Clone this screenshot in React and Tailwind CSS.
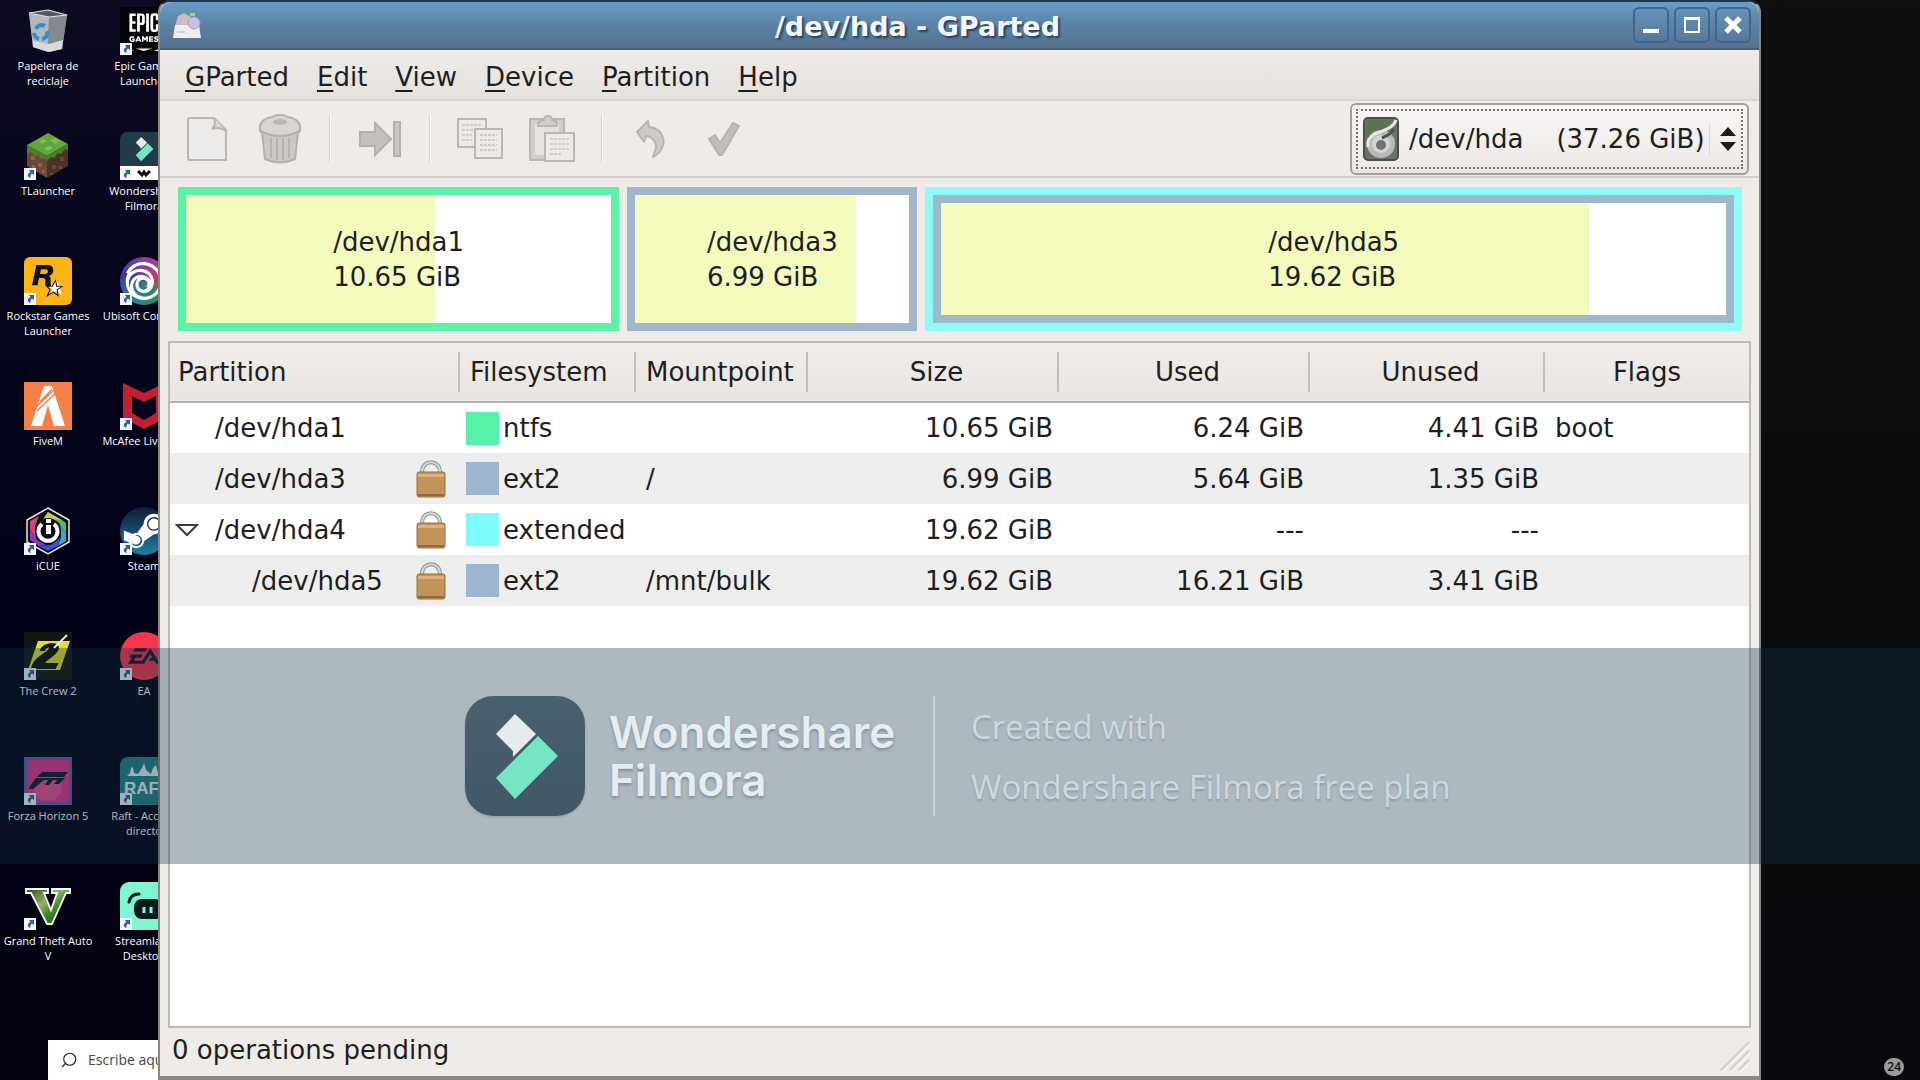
import React from 'react';
import { SiEpicgames, SiUbisoft, SiRockstargames, SiEa } from 'react-icons/si';
import { FaSteamSymbol } from 'react-icons/fa';
import { Search } from 'lucide-react';

/* ---------- Desktop icons ---------- */

function RecycleBin() {
  return (
    <svg viewBox="0 0 48 48" className="size-12">
      <path d="M5 6 24 3l19 5-5 34-13 3-16-5z" fill="#8d9095" />
      <path d="M5 6l20 4-1 35-15-5z" fill="#b4b7bb" />
      <path d="M25 10l18-2-5 34-14 3z" fill="#85888d" />
      <path d="M9 34l16 3 14-4-1 9-13 3-16-5z" fill="#d9dadb" />
      <path d="M5 6l19-3 19 5-18 2z" fill="#55585e" stroke="#e3e4e6" strokeWidth="1.2" />
      <path d="M12 22a6 6 0 0 1 9-3M10 26a7 7 0 0 0 5 6M18 32a6 6 0 0 0 5-8" fill="none" stroke="#2f8fd3" strokeWidth="4" />
    </svg>
  );
}

function GrassBlock() {
  return (
    <svg viewBox="0 0 48 48" className="size-12">
      <path d="M3 13v21l20 12V24z" fill="#6b4a35" />
      <path d="M44 13v21L23 46V24z" fill="#4a3326" />
      <path d="M24 1 44 12 23 24 3 13z" fill="#62a63c" />
      <path d="M3 13l20 11v5l-3-3-3 1-3-4-3 1-4-4-4 1zM44 12 23 24v5l4-4 3 1 4-5 3 1 4-5 3 1z" fill="#487f2c" />
      <path d="M14 9l5-2 4 2-5 3zM26 8l5-2 5 3-5 3zM20 16l5-2 4 2-5 3z" fill="#7dc152" />
      <path d="M7 24h4v4H7zM14 31h4v4h-4zM8 33h3v3H8zM18 38h3v3h-3z" fill="#8c6347" />
      <path d="M28 33h4v4h-4zM36 25h4v4h-4zM35 34h3v3h-3zM26 41h3v2h-3z" fill="#6a4a37" />
    </svg>
  );
}

function Rockstar() {
  return (
    <div className="relative grid size-12 place-items-center rounded-md bg-[#fbb316]">
      <svg viewBox="0 0 48 48" className="absolute inset-0 size-12">
        <path d="M32 22l3 6h6l-5 4 2 6-6-4-6 4 2-6-5-4h6z" fill="#fff" />
      </svg>
      <SiRockstargames size={32} color="#111" className="relative" />
    </div>
  );
}

function FiveM() {
  return (
    <svg viewBox="0 0 48 48" className="size-12">
      <rect width="48" height="48" fill="#f58149" />
      <path d="M20 4h8l13 40H30L24 23l-6 21H7z" fill="#fff" />
      <path d="M12 25 30 8M13 29 31 12M16 20 28 7" stroke="#f58149" strokeWidth="1.5" />
    </svg>
  );
}

function ICue() {
  return (
    <svg viewBox="0 0 48 48" className="size-12">
      <path d="M24 1 45 13v22L24 47 3 35V13z" fill="#0c0c14" stroke="#e8e8ee" strokeWidth="1.5" />
      <path d="M24 5l14 8-9 1-12 1z" fill="#c7d243" />
      <path d="M38 13l4 3v11l-7-11-7-4z" fill="#53b66a" />
      <path d="M42 27v7l-8 5 3-9-1-13z" fill="#36a9c9" />
      <path d="M34 39l-10 5-9-5 12-1 9-8z" fill="#3557d6" />
      <path d="M15 39l-9-6V22l6 10 10 6z" fill="#8d35c9" />
      <path d="M6 22v-8l9-5-4 10 1 13z" fill="#d4447a" />
      <circle cx="24" cy="24" r="13" fill="#0c0c14" />
      <path d="M18 17a9.500 9.500 0 1 0 12 0" fill="none" stroke="#fff" strokeWidth="4" />
      <path d="M22 12h5v4h-5zM22 18h5v9h-5z" fill="#fff" />
    </svg>
  );
}

function Crew() {
  return (
    <svg viewBox="0 0 48 48" className="size-12">
      <rect width="48" height="48" fill="#14170f" />
      <path d="M14 9h32L36 38H4z" fill="#e4e02c" />
      <path d="M17 18c2-6 16-9 17-2 0 6-12 10-15 16h14l-2 4H8c2-11 17-14 18-20 0-3-5-1-6 2z" fill="#11120d" stroke="#11120d" strokeWidth="2" />
      <path d="M43 3 30 16" stroke="#e9e9dd" strokeWidth="2" />
    </svg>
  );
}

function Forza() {
  return (
    <svg viewBox="0 0 48 48" className="size-12">
      <rect width="48" height="48" fill="#5a5fae" />
      <rect x="3" y="3" width="42" height="42" fill="#e0358c" />
      <circle cx="24" cy="30" r="14" fill="#f25c8c" opacity=".6" />
      <path d="M18 15h26l-4 5H13zM12 21h29l-6 6h-5l3-4h-4l-4 5h-4l3-5h-4L9 32H4z" fill="#131a2b" />
    </svg>
  );
}

function Gta() {
  return (
    <svg viewBox="0 0 48 48" className="size-12">
      <defs>
        <linearGradient id="gta" x1="0" y1="0" x2="1" y2="1">
          <stop offset="0" stopColor="#1f4a1c" />
          <stop offset=".4" stopColor="#8fb566" />
          <stop offset=".6" stopColor="#3f8a2a" />
          <stop offset="1" stopColor="#17400f" />
        </linearGradient>
      </defs>
      <path d="M2 7h22v4h-4l7 17 6-17h-5V7h18v4h-4L28 42h-5L7 11H2z" fill="url(#gta)" stroke="#fff" strokeWidth="1.800" />
    </svg>
  );
}

function Epic() {
  return (
    <div className="relative grid size-12 place-items-center bg-[#050507]">
      <div className="absolute inset-x-2 top-1 bottom-1 bg-white" />
      <SiEpicgames size={48} color="#050507" className="relative" />
    </div>
  );
}

function FilmoraMark({ className }) {
  return (
    <svg viewBox="0 0 120 120" className={className}>
      <path d="M50 18 31 38l17 17v6l23-23z" fill="#e6ebee" />
      <path d="M73 40 93 60 50 103 31 82z" fill="#75e5c4" />
    </svg>
  );
}

function FilmoraShortcut() {
  return (
    <div className="flex size-12 flex-col overflow-hidden rounded-t-lg bg-[#213c49]">
      <FilmoraMark className="h-[34px] w-12" />
      <div className="flex flex-1 justify-center bg-white">
        <svg viewBox="0 0 16 14" className="w-4">
          <path d="M2 5l4 4 2-3 2 3 4-4" fill="none" stroke="#111" strokeWidth="3" />
        </svg>
      </div>
    </div>
  );
}

function Ubisoft() {
  return (
    <div className="grid size-12 place-items-center rounded-full bg-[conic-gradient(#8b3fa8,#c43a6b,#2a8c5c,#2c7c9c,#3a3a9c,#8b3fa8)]">
      <SiUbisoft size={38} color="#fff" />
    </div>
  );
}

function McAfee() {
  return (
    <svg viewBox="0 0 48 48" className="size-12">
      <path d="M3 1l21 10L45 1v35L24 47 3 36zM12 14v17l12 7 12-7V14l-12 6z" fill="#c5202f" fillRule="evenodd" />
    </svg>
  );
}

function Steam() {
  return (
    <div className="grid size-12 place-items-center rounded-full bg-linear-to-b from-[#0d1b38] to-[#1d7fa8]">
      <FaSteamSymbol size={46} color="#fff" />
    </div>
  );
}

function Ea() {
  return (
    <div className="grid size-12 place-items-center rounded-full bg-[#f5364c]">
      <SiEa size={32} color="#1b1730" />
    </div>
  );
}

function Raft() {
  return (
    <svg viewBox="0 0 48 48" className="size-12">
      <rect width="48" height="48" rx="8" fill="#257f86" />
      <path d="M7 19l3-3 1-5 2-1 1 6 4 1 4-6 2-5 2 7 5 4 2-6 3-3 2 8 4 3z" fill="#e7f0f2" />
      <text x="4" y="37" fill="#e7f0f2" fontFamily="Liberation Sans Narrow, Liberation Sans" fontWeight="700" fontSize="17">RAFT</text>
    </svg>
  );
}

function Streamlabs() {
  return (
    <svg viewBox="0 0 48 48" className="size-12">
      <rect width="48" height="48" rx="9" fill="#80f5d2" />
      <rect x="14" y="17" width="29" height="20" rx="8" fill="#0b1a20" />
      <path d="M9 20c1-5 4-8 10-8" fill="none" stroke="#0b1a20" strokeWidth="3" strokeLinecap="round" />
      <path d="M24 25v6M31 25v6" stroke="#80f5d2" strokeWidth="3" />
    </svg>
  );
}

const shortcuts = [
  { label: 'Papelera de\nreciclaje', Icon: RecycleBin, plain: true },
  { label: 'Epic Games\nLauncher', Icon: Epic },
  { label: 'TLauncher', Icon: GrassBlock },
  { label: 'Wondershare\nFilmora', Icon: FilmoraShortcut },
  { label: 'Rockstar Games\nLauncher', Icon: Rockstar },
  { label: 'Ubisoft Connect', Icon: Ubisoft },
  { label: 'FiveM', Icon: FiveM, plain: true },
  { label: 'McAfee LiveSafe', Icon: McAfee },
  { label: 'iCUE', Icon: ICue },
  { label: 'Steam', Icon: Steam },
  { label: 'The Crew 2', Icon: Crew },
  { label: 'EA', Icon: Ea },
  { label: 'Forza Horizon 5', Icon: Forza },
  { label: 'Raft - Acceso\ndirecto', Icon: Raft },
  { label: 'Grand Theft Auto\nV', Icon: Gta },
  { label: 'Streamlabs\nDesktop', Icon: Streamlabs },
];

function Shortcut({ label, Icon, plain }) {
  return (
    <button className="flex h-[125px] flex-col items-center">
      <span className="relative block">
        <Icon />
        {!plain && (
          <svg viewBox="0 0 12 12" className="absolute bottom-0 left-0 size-3">
            <rect width="12" height="12" fill="#f1f4f8" />
            <path d="M5 2h5v5L8 5.500C6.500 6.500 6 8 6.500 10 3 9 3 5.500 6.500 4z" fill="#2b5c9c" />
          </svg>
        )}
      </span>
      <span className="mt-[3px] text-center text-[11px] leading-[15px] whitespace-pre text-white">{label}</span>
    </button>
  );
}

function DesktopSide() {
  return (
    <div className="flex w-[158px] shrink-0 flex-col overflow-hidden bg-linear-to-b from-[#0d0b20] via-[#03031a] via-40% to-[#02010e] pt-[7px]">
      <div className="grid w-48 grid-cols-2">
        {shortcuts.map(item => <Shortcut key={item.label} {...item} />)}
      </div>
      <label className="mt-auto ml-12 flex h-10 w-[340px] items-center gap-2.5 bg-white px-3 text-[#222]">
        <Search size={18} strokeWidth={1.5} className="shrink-0 -scale-x-100" />
        <input
          aria-label="Buscar"
          placeholder="Escribe aquí para buscar"
          className="w-full text-sm outline-none placeholder:text-[#444]"
        />
      </label>
    </div>
  );
}

/* ---------- Toolbar icons ---------- */

function NewIcon() {
  return (
    <svg viewBox="0 0 42 46" className="h-[46px] w-[42px]">
      <path d="M3 2h24l12 12v30H3q-2 0-2-2V4q0-2 2-2z" fill="#edebe9" stroke="#b9b6b3" strokeWidth="2" />
      <path d="M27 2c2 5 0 9-2 11 5-2 10-1 14 2" fill="#dad7d4" stroke="#b9b6b3" strokeWidth="2" />
    </svg>
  );
}

function TrashIcon() {
  return (
    <svg viewBox="0 0 44 50" className="h-[50px] w-11">
      <path d="M4 18h36l-3 27q-15 7-30 0z" fill="#cbc8c5" stroke="#b3b0ad" strokeWidth="2" />
      <path d="M13 24v20M19 24v22M25 24v22M31 24v20" stroke="#b6b3b0" strokeWidth="2" />
      <path d="M2 12q2-8 13-9 1-2 7-2t7 2q11 1 13 9v5q-20 10-40 0z" fill="#d9d6d3" stroke="#b3b0ad" strokeWidth="2" />
      <ellipse cx="22" cy="8" rx="7" ry="3" fill="#b9b6b3" />
    </svg>
  );
}

function ResizeIcon() {
  return (
    <svg viewBox="0 0 44 38" className="h-[38px] w-11">
      <path d="M2 12h15V3l16 16-16 16v-9H2z" fill="#c2bfbc" stroke="#b3b0ad" strokeWidth="2" />
      <rect x="36" y="2" width="6" height="34" fill="#c9c6c3" stroke="#b3b0ad" strokeWidth="2" />
    </svg>
  );
}

function CopyIcon() {
  return (
    <svg viewBox="0 0 48 44" className="h-11 w-12" fill="#edebe9" stroke="#b9b6b3" strokeWidth="2">
      <path d="M2 2h28v28H2z" />
      <path d="M6 8h20M6 13h20M6 18h10M6 23h10" strokeDasharray="3 1" stroke="#cfccc9" />
      <path d="M19 12h27v29H19z" />
      <path d="M24 18h17M24 23h17M24 28h17M24 33h17" strokeDasharray="3 1" stroke="#cfccc9" />
    </svg>
  );
}

function PasteIcon() {
  return (
    <svg viewBox="0 0 48 48" className="size-12" fill="#d0cdca" stroke="#b9b6b3" strokeWidth="2">
      <path d="M2 4h34v41H2z" />
      <path d="M7 9h24v31H7z" fill="#e5e2df" stroke="none" />
      <path d="M10 11q0-6 6-6 0-4 4-4t4 4q5 0 5 6z" />
      <path d="M17 18h29v28H17z" fill="#edebe9" />
      <path d="M22 24h19M22 29h19M22 34h19M22 39h12" strokeDasharray="3 1" stroke="#cfccc9" />
    </svg>
  );
}

function UndoIcon() {
  return (
    <svg viewBox="0 0 32 40" className="h-10 w-8">
      <path d="M12 2 1 13l7 10 2-6c8 1 10 6 10 12l-3 9c8-4 12-12 10-19C25 12 19 8 13 8z" fill="#cdcac7" stroke="#b6b3b0" strokeWidth="2" strokeLinejoin="round" />
    </svg>
  );
}

function ApplyIcon() {
  return (
    <svg viewBox="0 0 34 38" className="h-[38px] w-[34px]">
      <path d="M2 19l6-4 5 8L26 3l6 3-17 29h-3z" fill="#bfbcb9" stroke="#b6b3b0" strokeWidth="2" strokeLinejoin="round" />
    </svg>
  );
}

function ToolButton({ label, children }) {
  return (
    <button aria-label={label} disabled className="grid h-14 w-[72px] place-items-center">
      {children}
    </button>
  );
}

function ToolSeparator() {
  return <span className="mx-[13px] h-12 w-0.5 border-l border-[#d6d2cf] bg-white" />;
}

function DiskIcon() {
  return (
    <svg viewBox="0 0 36 44" className="h-11 w-9 shrink-0">
      <rect x="1" y="1" width="34" height="42" rx="4" fill="#6e716e" stroke="#4b4e4b" strokeWidth="2" />
      <path d="M3 3h28L17 15 3 18z" fill="#5d7352" />
      <circle cx="18" cy="27" r="14" fill="#b7bab7" />
      <path d="M33 3C30 12 20 13 12 17c-6 3-8 8-7 13" fill="none" stroke="#e6e8e6" strokeWidth="3" />
      <circle cx="18" cy="27" r="9" fill="#d3d5d3" />
      <circle cx="18" cy="28" r="5" fill="#70736f" />
      <path d="M31 12c-3 5-7 7-12 9" fill="none" stroke="#50534f" strokeWidth="3" />
    </svg>
  );
}

function LockIcon() {
  return (
    <svg viewBox="0 0 30 38" className="h-[38px] w-[30px]">
      <path d="M6 18v-6C6 -1 24 -1 24 12v6" fill="none" stroke="#8f9194" strokeWidth="4" />
      <path d="M6 18v-6C6 -1 24 -1 24 12v6" fill="none" stroke="#d5d7d9" strokeWidth="2" />
      <rect x="1" y="12" width="28" height="25" rx="2" fill="#c2935a" stroke="#97703f" strokeWidth="1" />
      <path d="M2 14h26v3H2z" fill="#dbb37b" />
      <path d="M2 34h26v2H2z" fill="#8b6a44" />
    </svg>
  );
}

function AppIcon() {
  return (
    <svg viewBox="0 0 30 28" className="h-7 w-[30px]">
      <path d="M3 15 6 5l6-3 7 4 3 9z" fill="#cdb9c7" />
      <path d="M3 14h24l2 13H1z" fill="#f1eef2" />
      <circle cx="22" cy="12" r="6" fill="#c5c3e0" stroke="#a5a2ba" />
      <path d="M18 2h5v3h-5z" fill="#b8d06a" />
      <path d="M5 21h8" stroke="#d5ced8" strokeWidth="2" />
    </svg>
  );
}

/* ---------- GParted window ---------- */

const menus = ['GParted', 'Edit', 'View', 'Device', 'Partition', 'Help'];

const partitions = [
  { name: '/dev/hda1', fs: 'ntfs', mount: '', size: '10.65 GiB', used: '6.24 GiB', unused: '4.41 GiB', flags: 'boot' },
  { name: '/dev/hda3', locked: true, fs: 'ext2', mount: '/', size: '6.99 GiB', used: '5.64 GiB', unused: '1.35 GiB', flags: '' },
  { name: '/dev/hda4', locked: true, open: true, fs: 'extended', mount: '', size: '19.62 GiB', used: '---', unused: '---', flags: '' },
  { name: '/dev/hda5', locked: true, child: true, fs: 'ext2', mount: '/mnt/bulk', size: '19.62 GiB', used: '16.21 GiB', unused: '3.41 GiB', flags: '' },
];

const fsColors = {
  ntfs: 'bg-[#54f3a9]',
  ext2: 'bg-[#9db5cf]',
  extended: 'bg-[#7dfcfe]',
};

const columns = [
  { title: 'Partition', className: 'w-[290px] pl-2 text-left' },
  { title: 'Filesystem', className: 'w-[176px] pl-2.5 text-left' },
  { title: 'Mountpoint', className: 'w-[172px] pl-2.5 text-left' },
  { title: 'Size', className: 'w-[251px] pr-0 pl-1.5 text-center' },
  { title: 'Used', className: 'w-[251px] pr-0 pl-1.5 text-center' },
  { title: 'Unused', className: 'w-[235px] pr-0 pl-1.5 text-center' },
  { title: 'Flags', className: 'text-center' },
];

const titleButton = 'grid size-9 place-items-center rounded-md border-2 border-[#3f658c] bg-linear-to-b from-[#6792b8] to-[#56799d]';

function TitleBar() {
  return (
    <header className="flex h-12 items-center gap-[5px] rounded-t-xl border-b-2 border-[#4a617a] bg-linear-to-b from-[#6c9cc3] via-[#5a82a5] to-[#56718f] pr-2 pl-3">
      <AppIcon />
      <h1 className="flex-1 pt-1 text-center text-[27px] leading-8 font-bold text-[#f2f7fb] [text-shadow:2px_2px_2px_#2b405a]">/dev/hda - GParted</h1>
      <button aria-label="Minimize" className={titleButton}>
        <svg viewBox="0 0 20 20" className="size-5"><path d="M2 16h16" stroke="#fff" strokeWidth="4" /></svg>
      </button>
      <button aria-label="Maximize" className={titleButton}>
        <svg viewBox="0 0 20 20" className="size-5"><path d="M3 4h14v13H3zM2 3h16" fill="none" stroke="#fff" strokeWidth="2" /></svg>
      </button>
      <button aria-label="Close" className={titleButton}>
        <svg viewBox="0 0 20 20" className="size-5"><path d="M3 3l14 14M17 3 3 17" stroke="#fff" strokeWidth="5" /></svg>
      </button>
    </header>
  );
}

function MenuBar() {
  return (
    <nav className="flex h-[51px] items-center gap-7 border-b-2 border-[#dad6d2] bg-linear-to-b from-[#efecea] to-[#e5e1dd] pt-1 pl-[25px]">
      {menus.map(menu => (
        <button key={menu}>
          <span className="underline decoration-2 underline-offset-4">{menu[0]}</span>{menu.slice(1)}
        </button>
      ))}
    </nav>
  );
}

function DevicePicker() {
  return (
    <div className="mr-2.5 ml-auto rounded-md border-2 border-[#a89d9b] bg-linear-to-b from-[#f8f6f5] to-[#ece8e6] p-1">
      <div className="flex h-[60px] items-center border-2 border-dotted border-[#77706e] px-[5px]">
        <DiskIcon />
        <select aria-label="Device" className="appearance-none border-r border-[#dcd8d5] pr-1 pl-2.5 outline-none">
          <option>/dev/hda{'\u00a0\u00a0\u00a0\u00a0'}(37.26 GiB)</option>
        </select>
        <svg viewBox="0 0 16 24" className="ml-2.5 h-6 w-4">
          <path d="M0 9 8 0l8 9zM0 15l8 9 8-9z" fill="#1c1c1c" />
        </svg>
      </div>
    </div>
  );
}

function ToolBar() {
  return (
    <div role="toolbar" className="flex h-[77px] items-center border-b-2 border-[#d3ceca] pl-3">
      <ToolButton label="New"><NewIcon /></ToolButton>
      <ToolButton label="Delete"><TrashIcon /></ToolButton>
      <ToolSeparator />
      <ToolButton label="Resize/Move"><ResizeIcon /></ToolButton>
      <ToolSeparator />
      <ToolButton label="Copy"><CopyIcon /></ToolButton>
      <ToolButton label="Paste"><PasteIcon /></ToolButton>
      <ToolSeparator />
      <ToolButton label="Undo"><UndoIcon /></ToolButton>
      <ToolButton label="Apply"><ApplyIcon /></ToolButton>
      <DevicePicker />
    </div>
  );
}

function Usage({ name, size, used, className }) {
  return (
    <div className={`flex border-8 ${className}`}>
      <div
        className="grid flex-1 place-items-center pt-0.5 leading-[35px]"
        style={{ backgroundImage: `linear-gradient(to right, #f4fbbc ${used}%, #fff ${used}%)` }}
      >
        <p>{name}<br />{size}</p>
      </div>
    </div>
  );
}

function DiskMap() {
  return (
    <div className="grid h-36 grid-cols-[441fr_290fr_816fr] gap-2">
      <Usage name="/dev/hda1" size="10.65 GiB" used={58.6} className="border-[#5df2aa]" />
      <Usage name="/dev/hda3" size="6.99 GiB" used={80.7} className="border-[#a3b5ca]" />
      <div className="flex border-8 border-[#8dfdf5]">
        <Usage name="/dev/hda5" size="19.62 GiB" used={82.6} className="flex-1 border-[#9db8cd]" />
      </div>
    </div>
  );
}

function PartitionTable() {
  return (
    <div className="mx-2 flex-1 border-2 border-[#bfbab7] bg-white">
      <table className="w-full table-fixed border-collapse">
        <thead>
          <tr className="h-[59px] border-b-2 border-[#b5b0ad] bg-linear-to-b from-[#f0edeb] to-[#e9e5e3]">
            {columns.map(col => (
              <th
                key={col.title}
                className={`bg-[linear-gradient(#c2bdba,#c2bdba)] bg-[length:2px_40px] bg-right bg-no-repeat font-normal last:bg-none ${col.className}`}
              >
                {col.title}
              </th>
            ))}
          </tr>
        </thead>
        <tbody>
          {partitions.map(p => (
            <tr key={p.name} className="h-[51px] bg-white even:bg-[#eeeeee]">
              <td className="p-0">
                <div className={`flex items-center pr-3.5 ${p.child ? 'pl-[82px]' : 'pl-[45px]'}`}>
                  {p.open && (
                    <button aria-label="Collapse" className="-ml-10 w-10">
                      <svg viewBox="0 0 24 14" className="h-3.5 w-6">
                        <path d="M2 2h20L12 12z" fill="#fff" stroke="#3c3c3c" strokeWidth="2" />
                      </svg>
                    </button>
                  )}
                  <span className="flex-1">{p.name}</span>
                  {p.locked && <LockIcon />}
                </div>
              </td>
              <td className="p-0">
                <div className="flex items-center gap-1 pl-1.5">
                  <span className={`size-[33px] ${fsColors[p.fs]}`} />
                  {p.fs}
                </div>
              </td>
              <td className="p-0 pl-2.5">{p.mount}</td>
              <td className="p-0 pr-1.5 text-right">{p.size}</td>
              <td className="p-0 pr-1.5 text-right">{p.used}</td>
              <td className="p-0 pr-1.5 text-right">{p.unused}</td>
              <td className="p-0 pl-2.5">{p.flags}</td>
            </tr>
          ))}
        </tbody>
      </table>
    </div>
  );
}

function StatusBar() {
  return (
    <footer className="flex h-12 items-center justify-between pr-2 pb-1 pl-3">
      <p>0 operations pending</p>
      <svg viewBox="0 0 36 36" className="size-8 self-end">
        <path d="M2 34 34 2M12 34l22-22M22 34l12-12" stroke="#d3cecb" strokeWidth="2" />
        <path d="M4 36 36 4M14 36l22-22M24 36l12-12" stroke="#fff" strokeWidth="1" />
      </svg>
    </footer>
  );
}

function GPartedWindow() {
  return (
    <main className="flex min-w-0 flex-1 flex-col rounded-t-xl border-x-2 border-t-2 border-b-4 border-[#8b8785] border-t-[#22364f] bg-[#eeebe8] font-['DejaVu_Sans',sans-serif] text-[26px] leading-8 text-[#1e1e1e]">
      <TitleBar />
      <MenuBar />
      <ToolBar />
      <div className="pt-[9px] pr-[17px] pb-2.5 pl-[18px]">
        <DiskMap />
      </div>
      <PartitionTable />
      <StatusBar />
    </main>
  );
}

/* ---------- Watermark band ---------- */

function Watermark() {
  return (
    <div className="absolute inset-x-0 top-[60%] flex h-[20%] items-center bg-[rgba(17,49,70,0.345)] pl-[465px]">
      <div className="rounded-[28px] bg-linear-to-b from-[#48616f] to-[#425766] shadow-sm">
        <FilmoraMark className="size-[120px]" />
      </div>
      <div className="w-[350px] border-r-2 border-[#c9d2d8] py-3 pl-6 font-['Inter',sans-serif] text-[44px] leading-12 font-semibold text-[#e6edf2] [text-shadow:0_2px_3px_rgba(80,95,110,0.5)]">
        <p>Wondershare</p>
        <p>Filmora</p>
      </div>
      <div className="pt-0.5 pl-9 text-[33px] leading-[60px] text-[#cdd7de] [text-shadow:0_2px_2px_rgba(100,115,130,0.4)]">
        <p>Created with</p>
        <p>Wondershare Filmora free plan</p>
      </div>
    </div>
  );
}

export default function App() {
  return (
    <div className="relative flex min-h-screen bg-[#0e0e0f] font-['Open_Sans','Noto_Sans',sans-serif]">
      <DesktopSide />
      <GPartedWindow />
      <aside className="flex w-[159px] shrink-0 items-end justify-end bg-linear-to-b from-[#0f0f0f] to-[#090a0d] pr-4 pb-1">
        <span className="rounded-full bg-[#9b9b9b] px-[3px] text-xs leading-[18px] font-semibold text-[#111]">24</span>
      </aside>
      <Watermark />
    </div>
  );
}
